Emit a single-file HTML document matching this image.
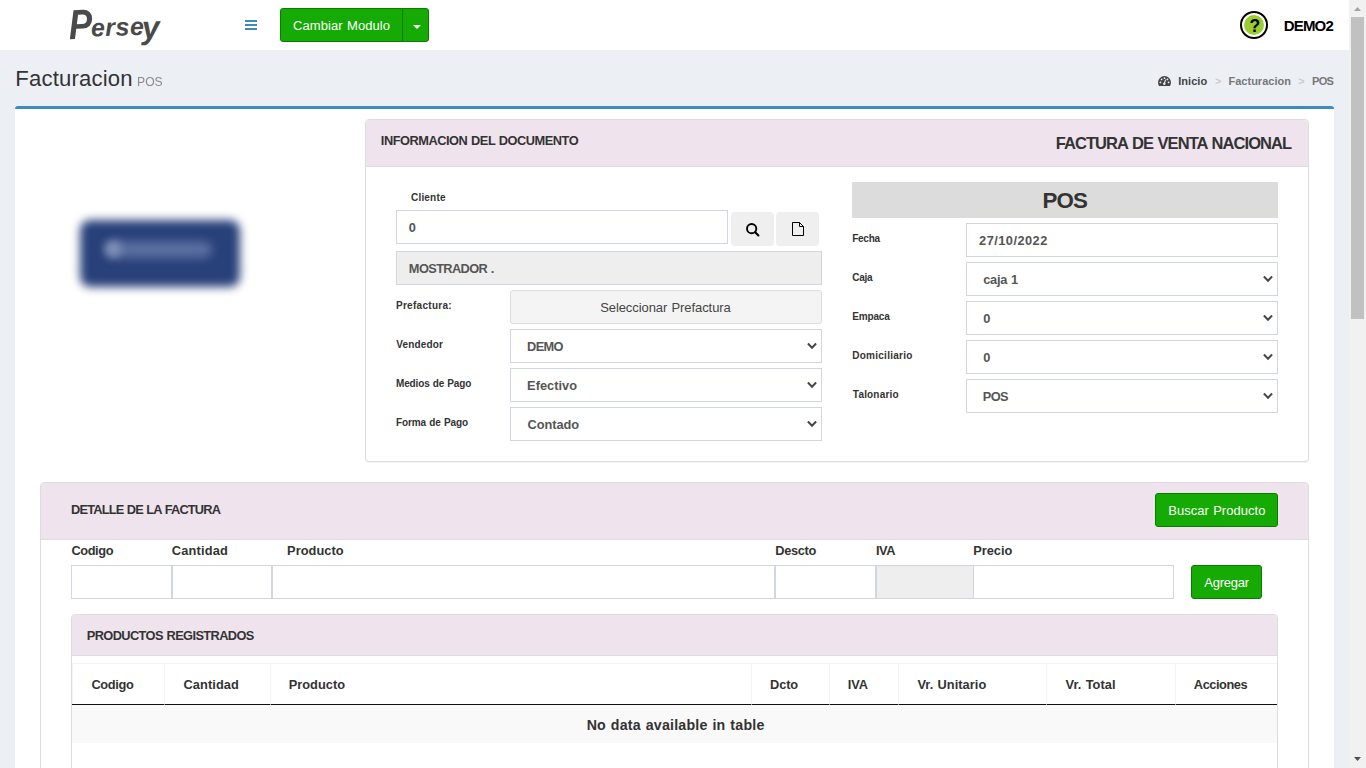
<!DOCTYPE html>
<html lang="es"><head><meta charset="utf-8"><title>Facturacion POS</title>
<style>
html,body{margin:0;padding:0;width:1366px;height:768px;overflow:hidden;background:#ecf0f5;font-family:"Liberation Sans",sans-serif}
#page{position:absolute;left:0;top:0;width:1349px;height:768px;overflow:hidden;background:#ecf0f5}
.a{position:absolute;box-sizing:content-box}
.t{position:absolute;white-space:pre;line-height:normal;word-spacing:.05em}
</style></head><body>
<div id="page">
<div class="a" style="left:0px;top:0px;width:1349px;height:50px;background:#fff"></div>
<div class="a" aria-label="Persey" style="left:66px;top:0;width:110px;height:50px;transform:rotate(-2deg);transform-origin:40px 30px;font-family:'Liberation Sans',sans-serif;font-weight:bold;font-style:italic;color:#4a4a4a"><span class="t" style="left:3px;top:0px;font-size:42px;transform:scaleX(.84);transform-origin:0 0">P</span><span class="t" style="left:25px;top:13px;font-size:25px;letter-spacing:.5px">erse</span><span class="t" style="left:76px;top:11px;font-size:32px">y</span></div>
<div class="a" style="left:245px;top:20px;width:12px;height:2px;background:#3c8dbc"></div>
<div class="a" style="left:245px;top:24px;width:12px;height:2px;background:#3c8dbc"></div>
<div class="a" style="left:245px;top:28px;width:12px;height:2px;background:#3c8dbc"></div>
<div class="a" style="left:280px;top:8px;width:121px;height:32px;background:#15aa04;border:1px solid #0b7c02;border-radius:3px 0 0 3px"></div>
<div class="a" style="left:402px;top:8px;width:25px;height:32px;background:#15aa04;border:1px solid #0b7c02;border-radius:0 3px 3px 0"></div>
<svg class="a" style="left:413px;top:25px" width="8" height="4" viewBox="0 0 8 4"><path d="M0 0H8L4 4Z" fill="#fff"/></svg>
<div class="a" style="left:1240px;top:11px;width:24px;height:24px;border:2px solid #000;border-radius:50%;background:#fff"></div>
<div class="a" style="left:1244px;top:15px;width:20px;height:20px;border-radius:50%;background:#9acd32"></div>
<svg class="a" style="left:1158px;top:76px" width="13" height="10" viewBox="0 0 13 10"><path d="M6.5 0A6.5 6.5 0 0 0 0 6.5c0 1.3.4 2.5 1 3.5h11c.6-1 1-2.200 1-3.500A6.500 6.500 0 0 0 6.500 0z" fill="#444"/><circle cx="2.400" cy="6.400" r=".9" fill="#ecf0f5"/><circle cx="3.600" cy="3.400" r=".9" fill="#ecf0f5"/><circle cx="6.500" cy="2.200" r=".9" fill="#ecf0f5"/><circle cx="9.400" cy="3.400" r=".9" fill="#ecf0f5"/><circle cx="10.600" cy="6.400" r=".9" fill="#ecf0f5"/><path d="M7.600 3.600L6.300 7.600" stroke="#ecf0f5" stroke-width="1.100"/><circle cx="6.300" cy="7.800" r="1.200" fill="#ecf0f5"/></svg>
<div class="a" style="left:15px;top:106px;width:1319px;height:720px;background:#fff;border-top:3px solid #3c8dbc;border-radius:3px;box-shadow:0 1px 1px rgba(0,0,0,.1)"></div>
<div class="a" style="left:80px;top:220px;width:160px;height:67px;background:#29417a;border-radius:10px;filter:blur(5px)"></div>
<div class="a" style="left:106px;top:241px;width:106px;height:17px;background:#5a6fa1;border-radius:9px;filter:blur(5px)"></div>
<div class="a" style="left:105px;top:241px;width:16px;height:16px;background:#8392ba;border-radius:50%;filter:blur(4px)"></div>
<div class="a" style="left:365px;top:119px;width:942px;height:341px;background:#fff;border:1px solid #ddd;border-radius:4px;box-shadow:0 1px 1px rgba(0,0,0,.05)"></div>
<div class="a" style="left:366px;top:120px;width:942px;height:46px;background:#efe4ee;border-bottom:1px solid #ddd;border-radius:3px 3px 0 0"></div>
<div class="a" style="left:396px;top:210px;width:330px;height:32px;background:#fff;border:1px solid #d2d6de"></div>
<div class="a" style="left:731px;top:212px;width:43px;height:34px;background:#efefef;border-radius:4px"></div>
<div class="a" style="left:776px;top:212px;width:43px;height:34px;background:#efefef;border-radius:4px"></div>
<svg class="a" style="left:746px;top:223px" width="14" height="14" viewBox="0 0 14 14"><circle cx="5.650" cy="5.650" r="4.650" fill="none" stroke="#000" stroke-width="1.900"/><path d="M9.200 9.200L12.400 12.400" stroke="#000" stroke-width="2.100" stroke-linecap="round"/></svg>
<svg class="a" style="left:792px;top:222px" width="12" height="14" viewBox="0 0 12 14"><path d="M.5.500H7.500L11.500 4.500V13.500H.500Z" fill="none" stroke="#000" stroke-width="1"/><path d="M7.500.500V4.500H11.500" fill="none" stroke="#000" stroke-width="1"/></svg>
<div class="a" style="left:396px;top:251px;width:424px;height:32px;background:#eee;border:1px solid #d2d6de"></div>
<div class="a" style="left:510px;top:290px;width:310px;height:32px;background:#f4f4f4;border:1px solid #ddd;border-radius:3px"></div>
<div class="a" style="left:510px;top:329px;width:310px;height:32px;background:#fff;border:1px solid #d2d6de"></div><svg class="a" style="left:806px;top:342px" width="12" height="8" viewBox="0 0 12 8"><path d="M1.9 1.5 L6 5.7 L10.1 1.5" fill="none" stroke="#484848" stroke-width="2"/></svg>
<div class="a" style="left:510px;top:368px;width:310px;height:32px;background:#fff;border:1px solid #d2d6de"></div><svg class="a" style="left:806px;top:381px" width="12" height="8" viewBox="0 0 12 8"><path d="M1.9 1.5 L6 5.7 L10.1 1.5" fill="none" stroke="#484848" stroke-width="2"/></svg>
<div class="a" style="left:510px;top:407px;width:310px;height:32px;background:#fff;border:1px solid #d2d6de"></div><svg class="a" style="left:806px;top:420px" width="12" height="8" viewBox="0 0 12 8"><path d="M1.9 1.5 L6 5.7 L10.1 1.5" fill="none" stroke="#484848" stroke-width="2"/></svg>
<div class="a" style="left:852px;top:182px;width:426px;height:36px;background:#dcdcdc"></div>
<div class="a" style="left:966px;top:223px;width:310px;height:32px;background:#fff;border:1px solid #d2d6de"></div>
<div class="a" style="left:966px;top:262px;width:310px;height:32px;background:#fff;border:1px solid #d2d6de"></div><svg class="a" style="left:1262px;top:275px" width="12" height="8" viewBox="0 0 12 8"><path d="M1.9 1.5 L6 5.7 L10.1 1.5" fill="none" stroke="#484848" stroke-width="2"/></svg>
<div class="a" style="left:966px;top:301px;width:310px;height:32px;background:#fff;border:1px solid #d2d6de"></div><svg class="a" style="left:1262px;top:314px" width="12" height="8" viewBox="0 0 12 8"><path d="M1.9 1.5 L6 5.7 L10.1 1.5" fill="none" stroke="#484848" stroke-width="2"/></svg>
<div class="a" style="left:966px;top:340px;width:310px;height:32px;background:#fff;border:1px solid #d2d6de"></div><svg class="a" style="left:1262px;top:353px" width="12" height="8" viewBox="0 0 12 8"><path d="M1.9 1.5 L6 5.7 L10.1 1.5" fill="none" stroke="#484848" stroke-width="2"/></svg>
<div class="a" style="left:966px;top:379px;width:310px;height:32px;background:#fff;border:1px solid #d2d6de"></div><svg class="a" style="left:1262px;top:392px" width="12" height="8" viewBox="0 0 12 8"><path d="M1.9 1.5 L6 5.7 L10.1 1.5" fill="none" stroke="#484848" stroke-width="2"/></svg>
<div class="a" style="left:40px;top:482px;width:1267px;height:400px;background:#fff;border:1px solid #ddd;border-radius:4px;box-shadow:0 1px 1px rgba(0,0,0,.05)"></div>
<div class="a" style="left:41px;top:483px;width:1267px;height:56px;background:#efe4ee;border-bottom:1px solid #ddd;border-radius:3px 3px 0 0"></div>
<div class="a" style="left:1155px;top:493px;width:121px;height:32px;background:#15aa04;border:1px solid #0b7c02;border-radius:3px"></div>
<div class="a" style="left:71px;top:565px;width:99px;height:32px;background:#fff;border:1px solid #d2d6de"></div>
<div class="a" style="left:172px;top:565px;width:98px;height:32px;background:#fff;border:1px solid #d2d6de"></div>
<div class="a" style="left:272px;top:565px;width:501px;height:32px;background:#fff;border:1px solid #d2d6de"></div>
<div class="a" style="left:775px;top:565px;width:99px;height:32px;background:#fff;border:1px solid #d2d6de"></div>
<div class="a" style="left:876px;top:565px;width:96px;height:32px;background:#eee;border:1px solid #d2d6de"></div>
<div class="a" style="left:973px;top:565px;width:199px;height:32px;background:#fff;border:1px solid #d2d6de"></div>
<div class="a" style="left:1191px;top:565px;width:69px;height:32px;background:#15aa04;border:1px solid #0b7c02;border-radius:3px"></div>
<div class="a" style="left:71px;top:614px;width:1205px;height:300px;background:#fff;border:1px solid #ddd;border-radius:4px;box-shadow:0 1px 1px rgba(0,0,0,.05)"></div>
<div class="a" style="left:72px;top:615px;width:1205px;height:40px;background:#efe4ee;border-bottom:1px solid #ddd;border-radius:3px 3px 0 0"></div>
<div class="a" style="left:72px;top:663px;width:1205px;height:1px;background:#f4f4f4"></div>
<div class="a" style="left:72px;top:663px;width:1px;height:42px;background:#f4f4f4"></div>
<div class="a" style="left:164px;top:663px;width:1px;height:42px;background:#f4f4f4"></div>
<div class="a" style="left:270px;top:663px;width:1px;height:42px;background:#f4f4f4"></div>
<div class="a" style="left:751px;top:663px;width:1px;height:42px;background:#f4f4f4"></div>
<div class="a" style="left:829px;top:663px;width:1px;height:42px;background:#f4f4f4"></div>
<div class="a" style="left:898px;top:663px;width:1px;height:42px;background:#f4f4f4"></div>
<div class="a" style="left:1046px;top:663px;width:1px;height:42px;background:#f4f4f4"></div>
<div class="a" style="left:1175px;top:663px;width:1px;height:42px;background:#f4f4f4"></div>
<div class="a" style="left:72px;top:704px;width:1205px;height:1px;background:#111"></div>
<div class="a" style="left:164px;top:704px;width:1px;height:1px;background:#999"></div>
<div class="a" style="left:270px;top:704px;width:1px;height:1px;background:#999"></div>
<div class="a" style="left:751px;top:704px;width:1px;height:1px;background:#999"></div>
<div class="a" style="left:829px;top:704px;width:1px;height:1px;background:#999"></div>
<div class="a" style="left:898px;top:704px;width:1px;height:1px;background:#999"></div>
<div class="a" style="left:1046px;top:704px;width:1px;height:1px;background:#999"></div>
<div class="a" style="left:1175px;top:704px;width:1px;height:1px;background:#999"></div>
<div class="a" style="left:72px;top:705px;width:1205px;height:38px;background:#f9f9f9"></div>
<span class="t" style="left:292.95px;top:18px;font-size:13px;color:#fff;letter-spacing:0.084px">Cambiar Modulo</span>
<span class="t" style="left:1283.86px;top:17px;font-size:15px;color:#000;font-weight:bold;letter-spacing:-0.86px">DEMO2</span>
<span class="t" style="left:1249.4px;top:16px;font-size:17.5px;color:#000;font-weight:bold">?</span>
<span class="t" style="left:15.34px;top:66px;font-size:22.1px;color:#333;letter-spacing:0.187px">Facturacion</span>
<span class="t" style="left:136.600px;top:74px;font-size:13.7px;color:#8a8a8a;transform:scaleX(.89);transform-origin:0 0">POS</span>
<span class="t" style="left:1178.26px;top:75px;font-size:11px;color:#444;font-weight:bold;letter-spacing:0.037px">Inicio</span>
<span class="t" style="left:1214.89px;top:75px;font-size:11px;color:#ccc;font-weight:bold">&gt;</span>
<span class="t" style="left:1228.54px;top:75px;font-size:11px;color:#777;font-weight:bold;letter-spacing:0.001px">Facturacion</span>
<span class="t" style="left:1298.33px;top:75px;font-size:11px;color:#ccc;font-weight:bold">&gt;</span>
<span class="t" style="left:1312.04px;top:75px;font-size:11px;color:#777;font-weight:bold;letter-spacing:-0.668px">POS</span>
<span class="t" style="left:380.85px;top:133px;font-size:12.8px;color:#333;font-weight:bold;letter-spacing:-0.47px">INFORMACION DEL DOCUMENTO</span>
<span class="t" style="left:1055.68px;top:134px;font-size:16.5px;color:#333;font-weight:bold;letter-spacing:-0.919px">FACTURA DE VENTA NACIONAL</span>
<span class="t" style="left:411.07px;top:192px;font-size:10px;color:#333;font-weight:bold;letter-spacing:0.176px">Cliente</span>
<span class="t" style="left:408.87px;top:220px;font-size:12.8px;color:#555;font-weight:bold">0</span>
<span class="t" style="left:408.86px;top:261px;font-size:12.8px;color:#555;font-weight:bold;letter-spacing:-0.614px">MOSTRADOR .</span>
<span class="t" style="left:395.95px;top:300px;font-size:10px;color:#333;font-weight:bold;letter-spacing:0.291px">Prefactura:</span>
<span class="t" style="left:600.13px;top:300px;font-size:13px;color:#444;letter-spacing:-0.072px">Seleccionar Prefactura</span>
<span class="t" style="left:396.35px;top:339px;font-size:10px;color:#333;font-weight:bold;letter-spacing:0.136px">Vendedor</span>
<span class="t" style="left:527.12px;top:339px;font-size:12.8px;color:#555;font-weight:bold;letter-spacing:-0.72px">DEMO</span>
<span class="t" style="left:395.95px;top:378px;font-size:10px;color:#333;font-weight:bold;letter-spacing:-0.135px">Medios de Pago</span>
<span class="t" style="left:527.12px;top:378px;font-size:12.8px;color:#555;font-weight:bold;letter-spacing:0.013px">Efectivo</span>
<span class="t" style="left:395.95px;top:417px;font-size:10px;color:#333;font-weight:bold;letter-spacing:-0.082px">Forma de Pago</span>
<span class="t" style="left:527.48px;top:417px;font-size:12.8px;color:#555;font-weight:bold;letter-spacing:-0.05px">Contado</span>
<span class="t" style="left:1042.41px;top:188px;font-size:22.3px;color:#333;font-weight:bold;letter-spacing:-0.864px">POS</span>
<span class="t" style="left:852.26px;top:233px;font-size:10px;color:#333;font-weight:bold;letter-spacing:-0.275px">Fecha</span>
<span class="t" style="left:979.07px;top:233px;font-size:12.8px;color:#555;font-weight:bold;letter-spacing:0.463px">27/10/2022</span>
<span class="t" style="left:852.34px;top:272px;font-size:10px;color:#333;font-weight:bold;letter-spacing:-0.255px">Caja</span>
<span class="t" style="left:983.23px;top:272px;font-size:12.8px;color:#555;font-weight:bold;letter-spacing:-0.286px">caja 1</span>
<span class="t" style="left:852.26px;top:311px;font-size:10px;color:#333;font-weight:bold;letter-spacing:-0.174px">Empaca</span>
<span class="t" style="left:983.18px;top:311px;font-size:12.8px;color:#555;font-weight:bold">0</span>
<span class="t" style="left:852.26px;top:350px;font-size:10px;color:#333;font-weight:bold;letter-spacing:0.262px">Domiciliario</span>
<span class="t" style="left:983.18px;top:350px;font-size:12.8px;color:#555;font-weight:bold">0</span>
<span class="t" style="left:852.85px;top:389px;font-size:10px;color:#333;font-weight:bold;letter-spacing:0.178px">Talonario</span>
<span class="t" style="left:982.82px;top:389px;font-size:12.8px;color:#555;font-weight:bold;letter-spacing:-0.696px">POS</span>
<span class="t" style="left:71.01px;top:502px;font-size:12.8px;color:#333;font-weight:bold;letter-spacing:-0.809px">DETALLE DE LA FACTURA</span>
<span class="t" style="left:1168.27px;top:503px;font-size:13px;color:#fff;letter-spacing:0.025px">Buscar Producto</span>
<span class="t" style="left:71.47px;top:543px;font-size:12.8px;color:#333;font-weight:bold;letter-spacing:-0.413px">Codigo</span>
<span class="t" style="left:171.73px;top:543px;font-size:12.8px;color:#333;font-weight:bold;letter-spacing:0.184px">Cantidad</span>
<span class="t" style="left:287.12px;top:543px;font-size:12.8px;color:#333;font-weight:bold;letter-spacing:0.05px">Producto</span>
<span class="t" style="left:775.29px;top:543px;font-size:12.8px;color:#333;font-weight:bold;letter-spacing:-0.334px">Descto</span>
<span class="t" style="left:876.02px;top:543px;font-size:12.8px;color:#333;font-weight:bold;letter-spacing:-0.495px">IVA</span>
<span class="t" style="left:973.22px;top:543px;font-size:12.8px;color:#333;font-weight:bold;letter-spacing:0.004px">Precio</span>
<span class="t" style="left:1204.37px;top:575px;font-size:13px;color:#fff;letter-spacing:-0.245px">Agregar</span>
<span class="t" style="left:86.73px;top:628px;font-size:12.8px;color:#333;font-weight:bold;letter-spacing:-0.596px">PRODUCTOS REGISTRADOS</span>
<span class="t" style="left:91.47px;top:677px;font-size:12.8px;color:#333;font-weight:bold;letter-spacing:-0.355px">Codigo</span>
<span class="t" style="left:183.47px;top:677px;font-size:12.8px;color:#333;font-weight:bold;letter-spacing:0.092px">Cantidad</span>
<span class="t" style="left:288.63px;top:677px;font-size:12.8px;color:#333;font-weight:bold;letter-spacing:0.049px">Producto</span>
<span class="t" style="left:770.02px;top:677px;font-size:12.8px;color:#333;font-weight:bold;letter-spacing:-0.1px">Dcto</span>
<span class="t" style="left:847.63px;top:677px;font-size:12.8px;color:#333;font-weight:bold;letter-spacing:0.021px">IVA</span>
<span class="t" style="left:917.42px;top:677px;font-size:12.8px;color:#333;font-weight:bold;letter-spacing:0.06px">Vr. Unitario</span>
<span class="t" style="left:1065.59px;top:677px;font-size:12.8px;color:#333;font-weight:bold;letter-spacing:0.049px">Vr. Total</span>
<span class="t" style="left:1193.87px;top:677px;font-size:12.8px;color:#333;font-weight:bold;letter-spacing:-0.453px">Acciones</span>
<span class="t" style="left:586.67px;top:717px;font-size:14.2px;color:#333;font-weight:bold;letter-spacing:0.212px">No data available in table</span>
</div>
<div class="a" style="left:1349px;top:0px;width:17px;height:768px;background:#f1f1f1"></div>
<div class="a" style="left:1351px;top:17px;width:13px;height:302px;background:#c1c1c1"></div>
<svg class="a" style="left:1354px;top:7px" width="7" height="4" viewBox="0 0 7 4"><path d="M0 4H7L3.500 0Z" fill="#a3a3a3"/></svg>
<svg class="a" style="left:1354px;top:757px" width="7" height="4" viewBox="0 0 7 4"><path d="M0 0H7L3.500 4Z" fill="#505050"/></svg>
</body></html>
